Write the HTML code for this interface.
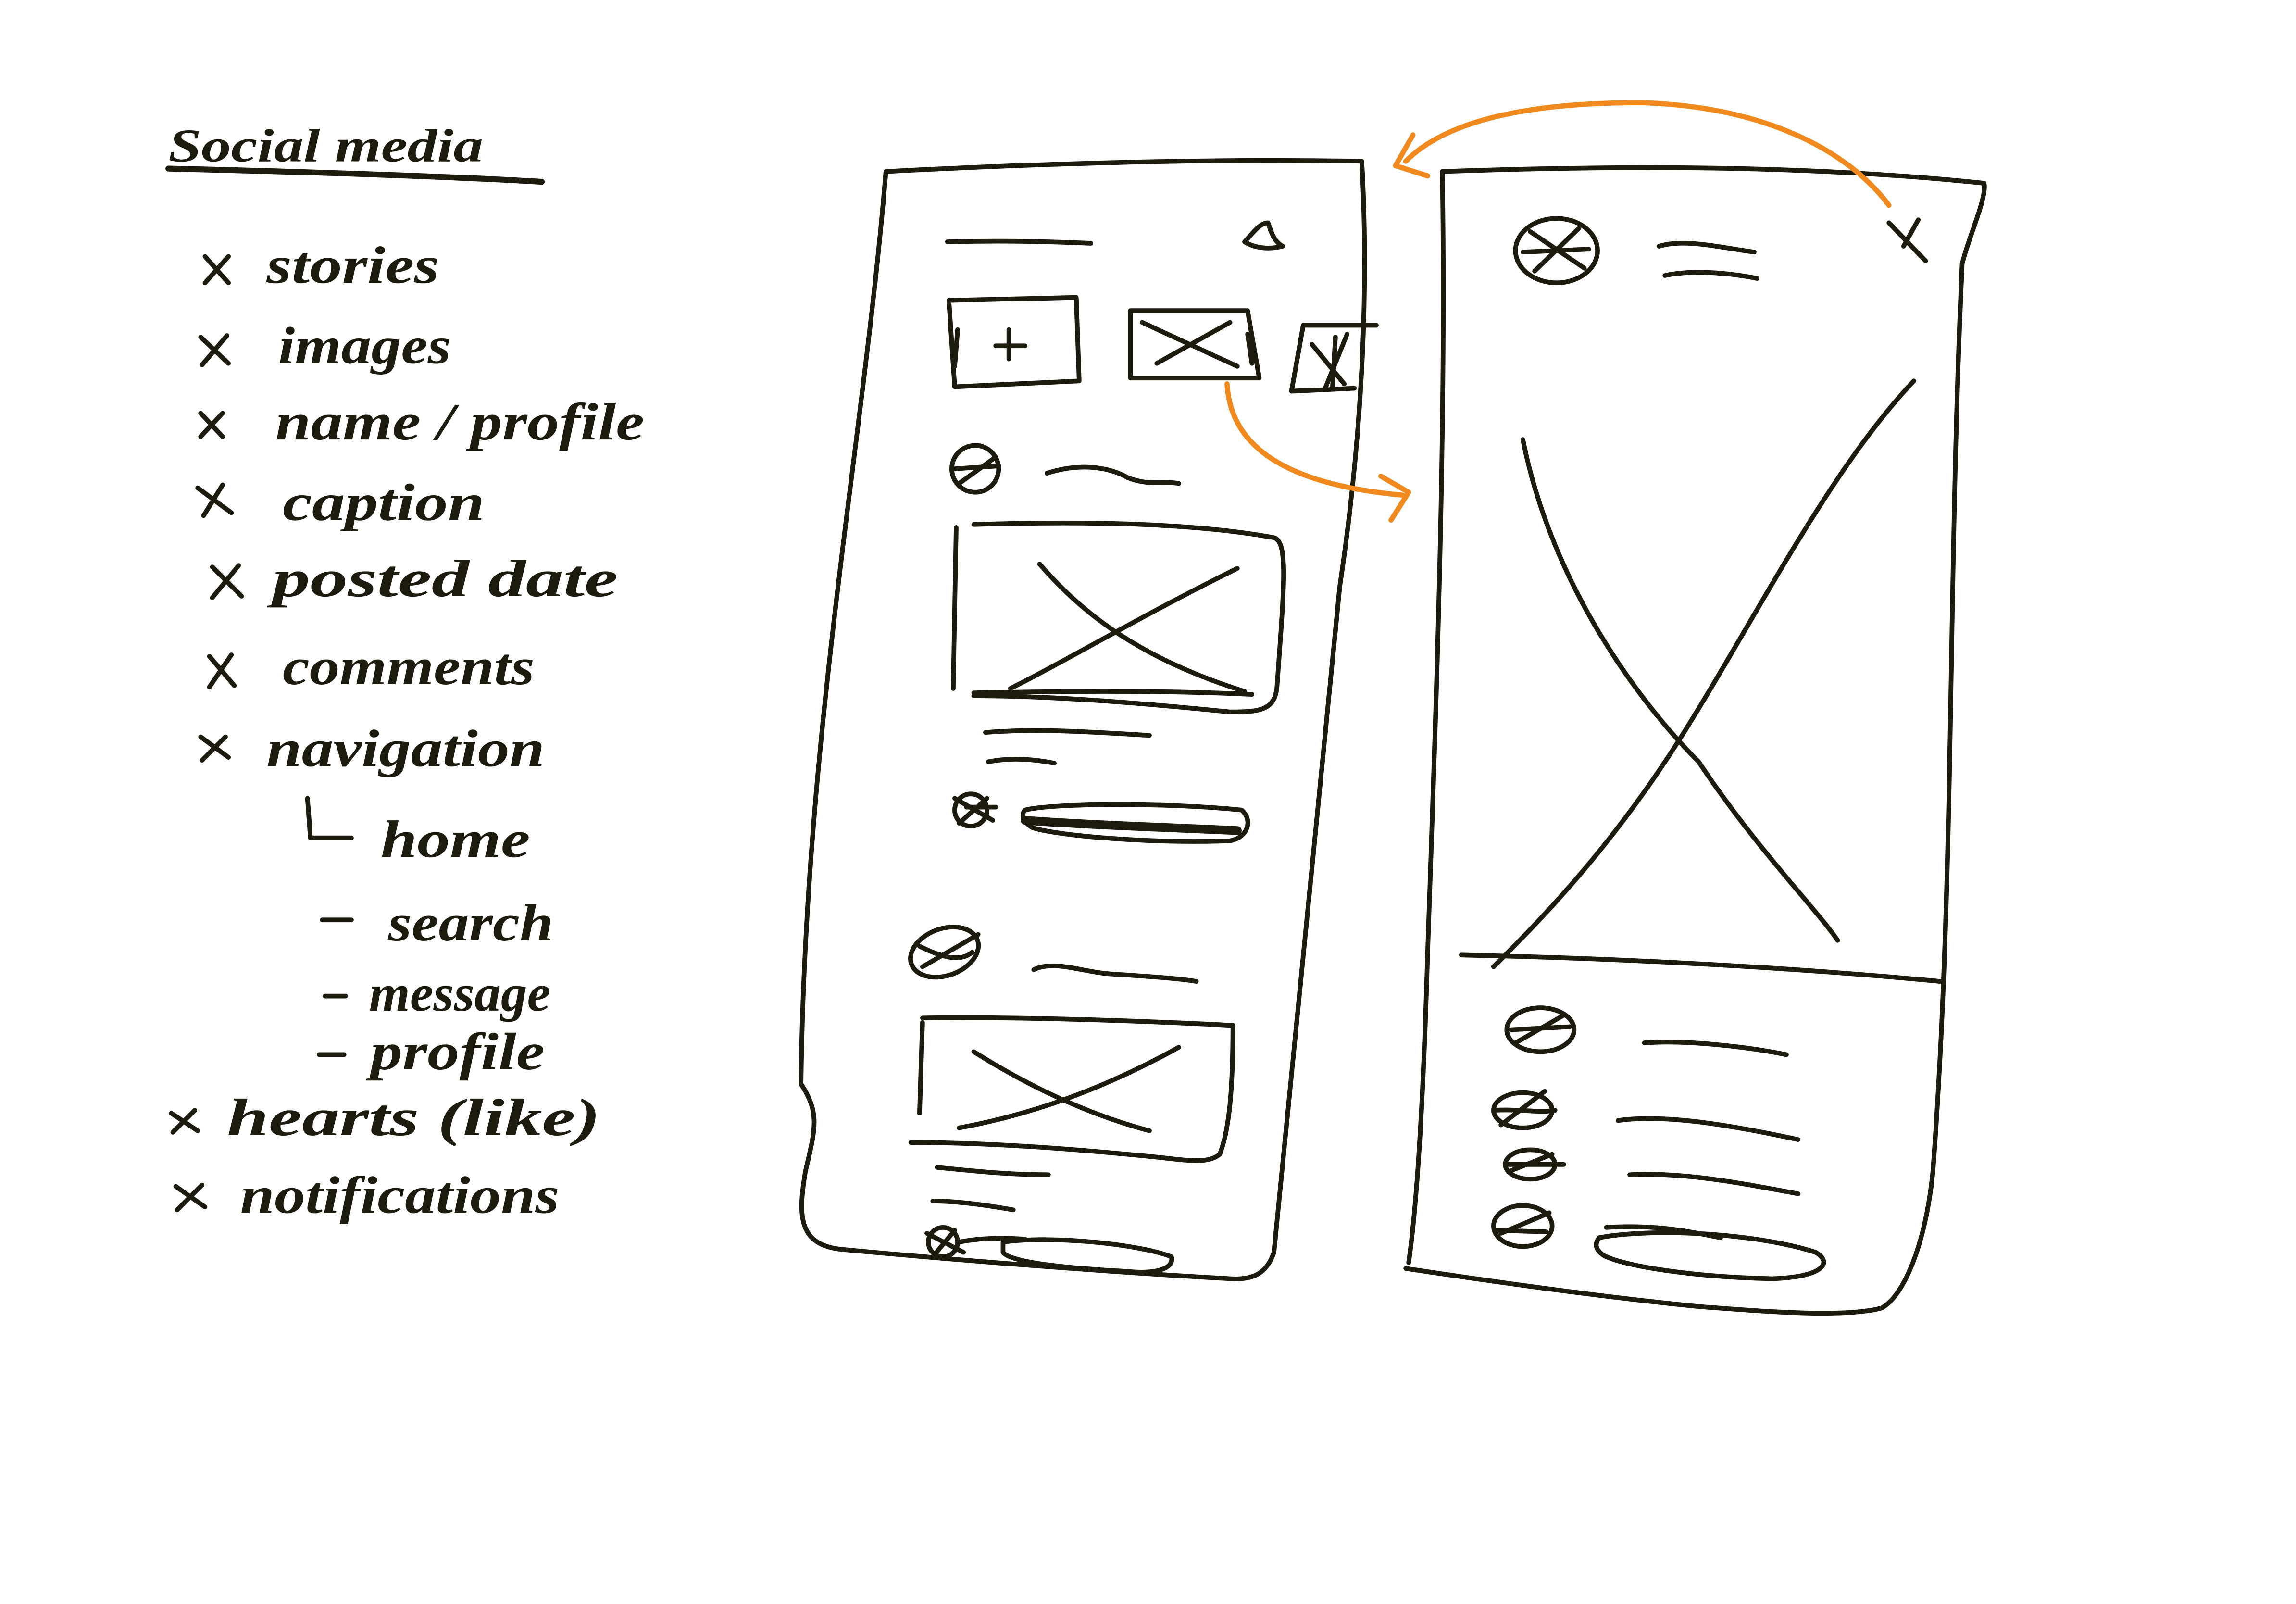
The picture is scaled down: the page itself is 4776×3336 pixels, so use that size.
<!DOCTYPE html>
<html><head><meta charset="utf-8"><style>
html,body{margin:0;padding:0;background:#fff;}
svg{display:block;}
text{font-family:"Liberation Serif",serif;font-style:italic;font-weight:bold;fill:#1d1b0e;}
</style></head><body>
<svg width="4776" height="3336" viewBox="0 0 1568 1095" xmlns="http://www.w3.org/2000/svg">
<rect width="1568" height="1095" fill="#fff"/>
<g fill="none" stroke="#1d1b0e" stroke-width="3.2" stroke-linecap="round" stroke-linejoin="round">
<path d="M115 115 C200 117 300 120 370 124" stroke-width="4"/>
<path d="M140 175 L156 193 M156 175 L140 193"/>
<path d="M137 230 L156 248 M155 229 L138 249"/>
<path d="M137 282 L152 298 M152 282 L137 298"/>
<path d="M135 333 L158 350 M152 331 L139 352"/>
<path d="M145 387 L165 407 M163 386 L145 408"/>
<path d="M143 448 L160 468 M158 447 L143 469"/>
<path d="M137 503 L156 517 M154 503 L138 519"/>
<path d="M210 545 L212 572 L240 572"/>
<path d="M220 628 L240 628"/>
<path d="M222 680 L236 680"/>
<path d="M218 720 L235 720"/>
<path d="M117 760 L135 772 M133 758 L118 773"/>
<path d="M120 810 L140 824 M138 809 L121 826"/>
<path d="M605 117 C700 112 820 108 930 110 C935 200 930 300 915 400 C900 550 885 700 870 855 C865 870 855 874 840 873 C750 868 650 860 575 853 C545 850 545 830 550 800 C557 770 560 760 547 740 C550 500 590 300 605 117 Z"/>
<path d="M647 165 C690 164 720 165 745 166"/>
<path d="M850 165 C855 160 860 152 866 152 C868 158 870 165 876 168 C868 170 858 170 850 165 Z"/>
<path d="M648 205 L735 203 L737 260 L652 264 Z M654 225 L652 250"/>
<path d="M689 225 L689 245 M680 236 L700 236"/>
<path d="M772 212 L852 212 L860 258 L772 258 Z M780 220 L845 250 M840 220 L790 248 M852 228 L855 248"/>
<path d="M890 222 L940 222 M890 222 L882 267 L925 265 M896 235 L918 262 M920 228 L905 265 M912 230 L910 265"/>
<circle cx="666" cy="320" r="16"/>
<path d="M655 330 L680 312 M652 320 L682 318"/>
<path d="M715 323 C740 315 760 320 770 326 C785 332 795 328 805 330"/>
<path d="M665 358 C730 356 810 356 870 367 C880 370 877 400 872 470 C870 485 860 486 840 486 C780 480 720 475 665 475"/>
<path d="M653 360 L651 470"/>
<path d="M710 385 C740 420 780 450 850 472 M845 388 C780 420 730 450 690 470"/>
<path d="M665 473 C720 472 790 471 855 474"/>
<path d="M673 500 C710 497 750 500 785 502"/>
<path d="M675 520 C690 517 705 518 720 521"/>
<circle cx="663" cy="553" r="11"/>
<path d="M652 545 L678 560 M674 545 L655 562 M660 551 L680 551"/>
<path d="M700 553 C720 548 800 548 848 553 C856 560 852 572 840 574 C780 576 720 570 705 565 C697 560 698 555 700 553 Z"/>
<path d="M700 560 C740 563 800 565 845 567" stroke-width="6"/>
<ellipse cx="645" cy="650" rx="24" ry="16" transform="rotate(-20 645 650)"/>
<path d="M630 660 L668 638 M628 646 C640 652 655 658 664 650"/>
<path d="M706 662 C720 655 740 664 760 665 C790 667 805 668 817 670"/>
<path d="M630 695 C700 694 780 697 842 700 C842 740 840 770 833 788 C825 795 810 792 790 790 C740 785 680 780 622 780"/>
<path d="M630 698 L628 760"/>
<path d="M665 718 C700 740 740 760 785 772 M805 715 C760 740 710 760 655 770"/>
<path d="M640 797 C670 800 690 802 716 802"/>
<path d="M637 820 C655 820 675 823 692 826"/>
<circle cx="644" cy="848" r="10"/>
<path d="M633 842 L658 855 M652 840 L637 858 M655 848 C670 845 685 845 700 846"/>
<path d="M685 848 C720 843 780 850 800 858 C802 866 790 870 770 868 C730 866 690 862 685 855 Z"/>
<path d="M985 117 C1100 113 1230 112 1355 125 C1357 135 1345 160 1340 180 C1330 400 1335 600 1320 800 C1315 850 1300 885 1285 893 C1260 900 1200 895 1160 892 C1090 885 1020 875 960 866"/>
<path d="M985 117 C988 300 980 500 975 650 C972 750 968 820 962 862"/>
<ellipse cx="1063" cy="171" rx="28" ry="22"/>
<path d="M1045 158 L1082 183 M1078 156 L1048 185 M1040 172 L1085 170"/>
<path d="M1133 168 C1150 163 1170 168 1198 172"/>
<path d="M1137 188 C1155 184 1180 186 1200 190"/>
<path d="M1290 152 L1315 178 M1310 150 L1300 168"/>
<path d="M1040 300 C1060 400 1120 480 1160 520 C1200 580 1240 620 1255 642"/>
<path d="M1307 260 C1250 320 1200 420 1150 500 C1100 580 1050 630 1020 660"/>
<path d="M998 652 C1100 654 1220 660 1325 670"/>
<ellipse cx="1052" cy="703" rx="23" ry="15"/>
<path d="M1035 712 L1068 693 M1032 703 L1072 701"/>
<path d="M1123 712 C1150 710 1190 714 1220 720"/>
<ellipse cx="1040" cy="758" rx="20" ry="12"/>
<path d="M1025 768 L1055 745 M1020 758 C1040 757 1050 760 1062 758"/>
<path d="M1105 765 C1140 760 1190 770 1228 778"/>
<ellipse cx="1045" cy="795" rx="17" ry="10"/>
<path d="M1030 800 L1060 788 M1028 795 L1068 795"/>
<path d="M1113 802 C1150 800 1190 808 1228 815"/>
<ellipse cx="1040" cy="837" rx="20" ry="14"/>
<path d="M1025 842 L1058 828 M1022 840 L1056 841"/>
<path d="M1097 838 C1130 836 1150 840 1175 845"/>
<path d="M1092 845 C1130 838 1200 842 1240 855 C1252 862 1245 872 1210 873 C1160 872 1110 865 1095 857 C1088 852 1090 848 1092 845 Z"/>
</g>
<g fill="none" stroke="#f08a1e" stroke-width="3.5" stroke-linecap="round" stroke-linejoin="round">
<path d="M1290 140 C1260 100 1200 72 1120 70 C1050 70 990 80 960 110"/>
<path d="M965 92 L953 113 L975 120"/>
<path d="M838 262 C840 300 870 330 958 338"/>
<path d="M943 325 L962 336 L950 355"/>
</g>
<g font-size="36">
<text x="115" y="110" font-size="32" textLength="215" lengthAdjust="spacingAndGlyphs">Social media</text>
<text x="182" y="193" textLength="118" lengthAdjust="spacingAndGlyphs">stories</text>
<text x="190" y="248" textLength="118" lengthAdjust="spacingAndGlyphs">images</text>
<text x="188" y="300" textLength="252" lengthAdjust="spacingAndGlyphs">name / profile</text>
<text x="193" y="355" textLength="138" lengthAdjust="spacingAndGlyphs">caption</text>
<text x="186" y="407" textLength="236" lengthAdjust="spacingAndGlyphs">posted date</text>
<text x="193" y="467" textLength="172" lengthAdjust="spacingAndGlyphs">comments</text>
<text x="182" y="523" textLength="190" lengthAdjust="spacingAndGlyphs">navigation</text>
<text x="260" y="585" textLength="102" lengthAdjust="spacingAndGlyphs">home</text>
<text x="265" y="642" textLength="113" lengthAdjust="spacingAndGlyphs">search</text>
<text x="252" y="690" textLength="124" lengthAdjust="spacingAndGlyphs">message</text>
<text x="253" y="730" textLength="119" lengthAdjust="spacingAndGlyphs">profile</text>
<text x="155" y="775" textLength="255" lengthAdjust="spacingAndGlyphs">hearts (like)</text>
<text x="164" y="828" textLength="218" lengthAdjust="spacingAndGlyphs">notifications</text>
</g>
</svg>
</body></html>
